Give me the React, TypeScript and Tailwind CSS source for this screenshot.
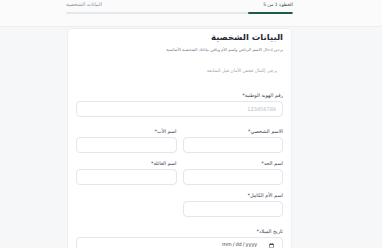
import { useState } from 'react'

const font = { fontFamily: '"DejaVu Sans", "Noto Sans", sans-serif' }

function Field({ label, placeholder, type = 'text' }: { label: string; placeholder?: string; type?: string }) {
  return (
    <div className="flex flex-col">
      <label className="text-[5px] leading-[6px] text-[#374151] mb-[3px]">{label}</label>
      <input
        type={type}
        placeholder={placeholder}
        className="h-[16px] w-full rounded-[4px] border border-[#e3e6ea] bg-white px-[6px] text-right text-[5px] text-[#374151] placeholder:text-[#b8bcc4] outline-none [&::-webkit-date-and-time-container]:justify-end [&::-webkit-datetime-edit]:flex-none [&::-webkit-datetime-edit]:ml-auto [&::-webkit-calendar-picker-indicator]:ml-[1px]"
      />
    </div>
  )
}

export default function App() {
  const [step] = useState(1)
  const total = 5

  return (
    <div dir="rtl" style={font} className="h-[248px] w-[382px] bg-[#f6f7f9] overflow-hidden">
      <header className="h-[27px] border-b border-[#eceef1] bg-[#fbfbfc]">
        <div className="mr-[89px] w-[227px] pt-[1px]">
          <div className="flex items-center justify-between h-[8px]">
            <span className="text-[4.5px] font-medium text-[#374151]">الخطوة {step} من {total}</span>
            <span className="text-[5px] text-[#8a9099]">البيانات الشخصية</span>
          </div>
          <div className="mt-[3px] h-[2px] w-full rounded-full bg-[#e4e7eb] overflow-hidden flex">
            <div className="h-full rounded-full bg-[#1f5c45]" style={{ width: `${(step / total) * 100}%` }} />
          </div>
        </div>
      </header>

      <main className="mr-[90px] w-[225px] mt-[1px] rounded-t-[5px] border border-[#eef0f2] bg-white px-[8px] pt-[2px] pb-[10px]">
        <h1 className="text-[8.5px] leading-[12px] font-bold text-[#1f2937]">البيانات الشخصية</h1>
        <p className="mt-[3px] text-[4px] leading-[7px] text-[#6b7280]">يرجى إدخال الاسم الرباعي واسم الأم وباقي بياناتك الشخصية الأساسية</p>

        <div className="mt-[14px] pr-[6px] h-[14px] text-[4.5px] leading-[7px] text-[#9ca3af]">يرجى إكمال فحص الأمان قبل المتابعة</div>

        <div className="mt-[11px] flex flex-col gap-[11px]">
          <Field label="رقم الهوية الوطنية*" placeholder="123456789" />
          <div className="grid grid-cols-2 gap-x-[6px] gap-y-[7px]">
            <Field label="الاسم الشخصي*" />
            <Field label="اسم الأب*" />
            <Field label="اسم الجد*" />
            <Field label="اسم العائلة*" />
            <Field label="اسم الأم الكامل*" />
          </div>
          <Field label="تاريخ الميلاد*" type="date" />
        </div>
      </main>
    </div>
  )
}
